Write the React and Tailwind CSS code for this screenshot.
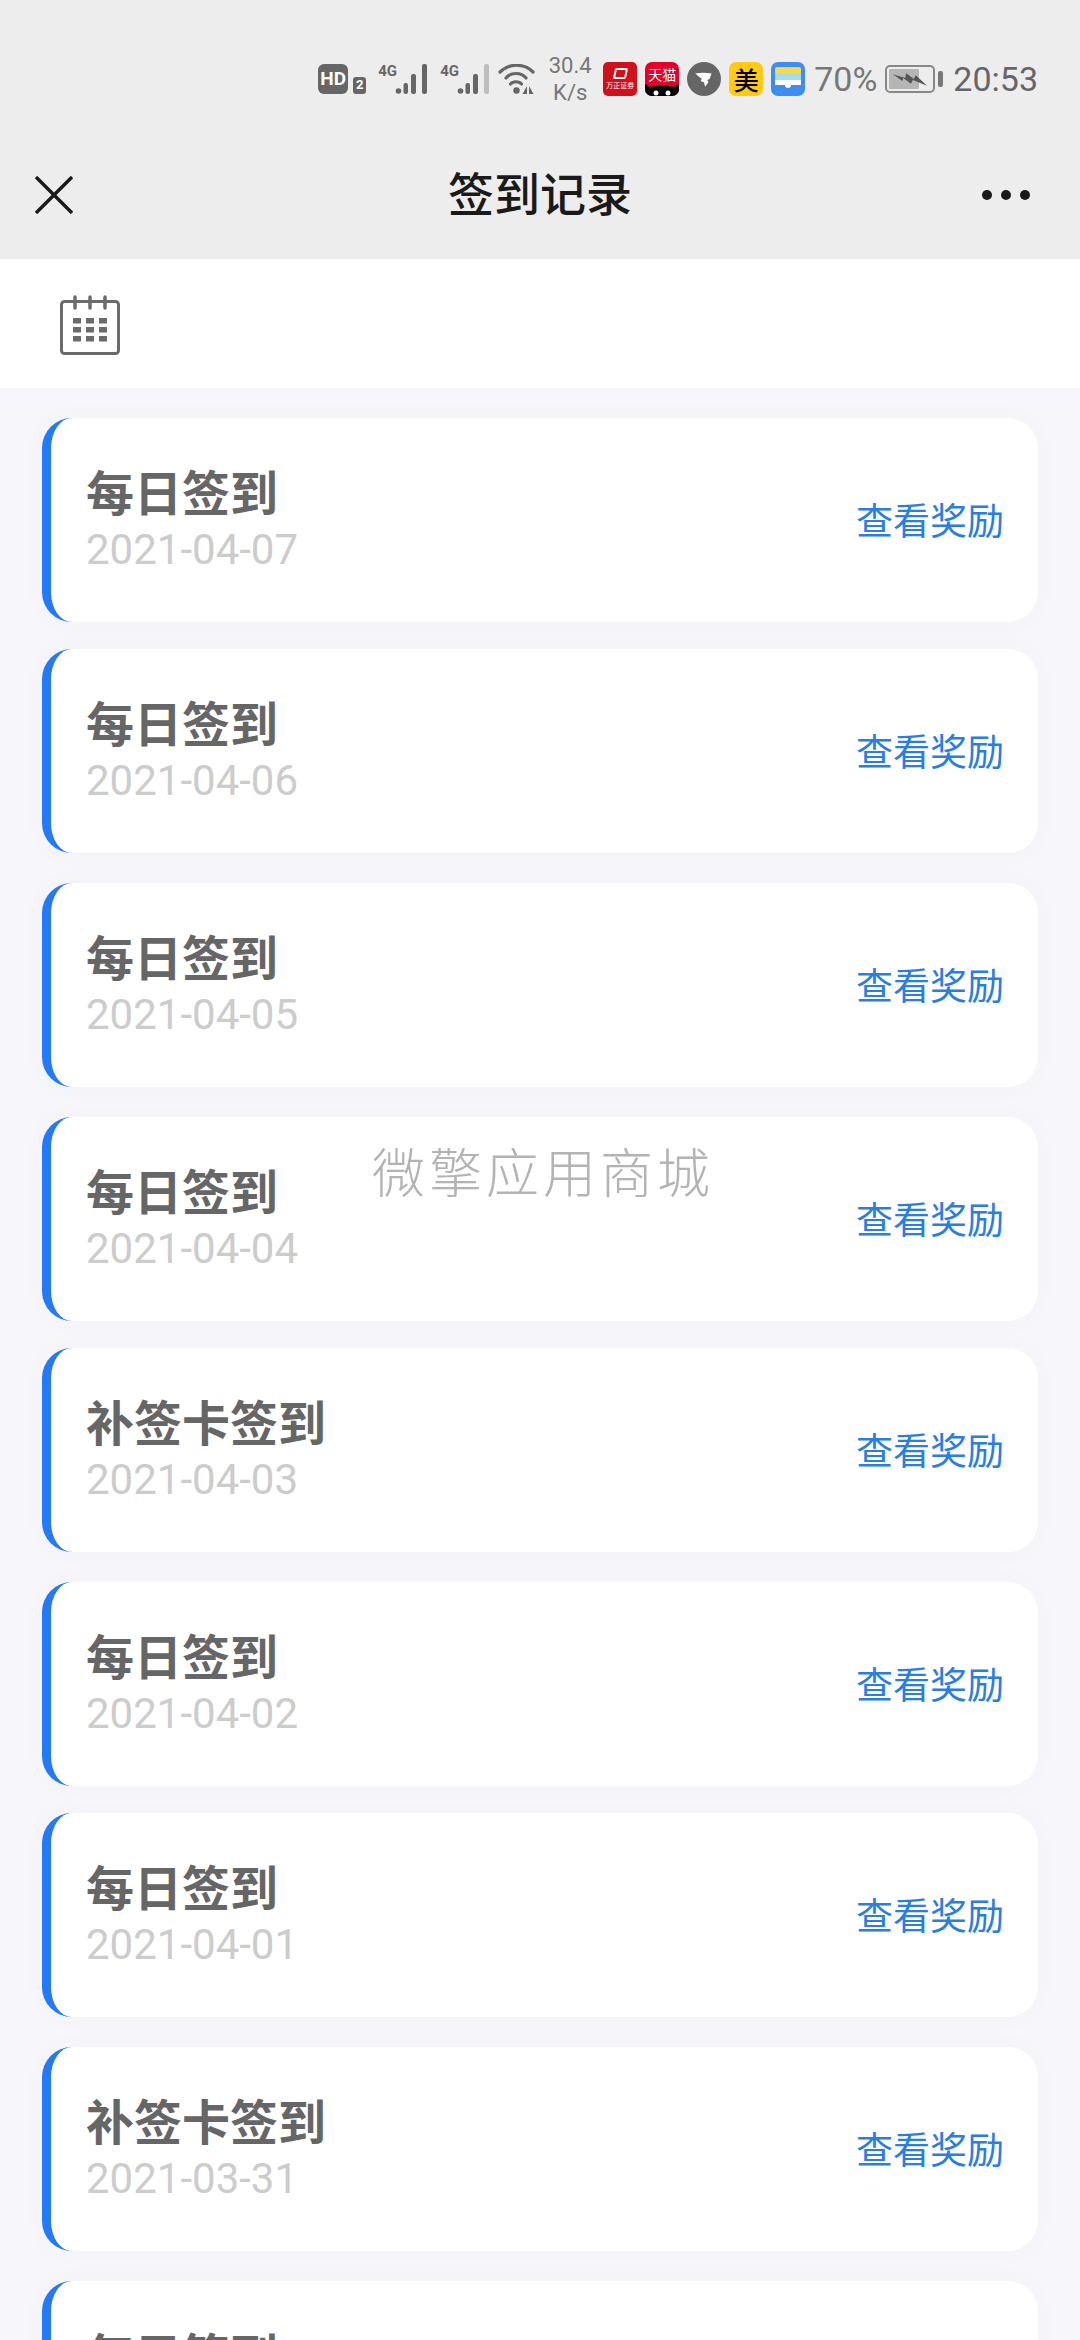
import { Fragment } from 'react';

const records = [
    { title: '每日签到', date: '2021-04-07', gap: 'mt-0' },
    { title: '每日签到', date: '2021-04-06', gap: 'mt-[27px]' },
    { title: '每日签到', date: '2021-04-05', gap: 'mt-[30px]' },
    { title: '每日签到', date: '2021-04-04', gap: 'mt-[30px]' },
    { title: '补签卡签到', date: '2021-04-03', gap: 'mt-[27px]' },
    { title: '每日签到', date: '2021-04-02', gap: 'mt-[30px]' },
    { title: '每日签到', date: '2021-04-01', gap: 'mt-[27px]' },
    { title: '补签卡签到', date: '2021-03-31', gap: 'mt-[30px]' },
    { title: '每日签到', date: '2021-03-30', gap: 'mt-[30px]' },
];

const cjk = "font-['Roboto','Noto_Sans_CJK_SC',sans-serif]";

function Signal({ weak }) {
    return (
        <div className="relative w-[50px] h-[30px] shrink-0">
            <span className="absolute left-0 -top-[1px] text-[15px] leading-[16px] font-bold text-[#666]">4G</span>
            <svg viewBox="0 0 50 30" className="absolute inset-0 w-[50px] h-[30px]">
                <circle cx="20.5" cy="27" r="2.8" fill="#666" />
                <rect x="25.5" y="19" width="4.5" height="11" rx="2" fill="#666" />
                <rect x="33" y="10" width="5" height="20" rx="2" fill="#666" />
                <rect x="44" y="0" width="5" height="30" rx="2" fill={weak ? '#bdbdbd' : '#666'} />
            </svg>
        </div>
    );
}

function StatusBar() {
    return (
        <div className="h-[130px] pt-[54px] pr-[42px] flex items-start justify-end text-[#666] font-['Roboto',sans-serif]">
            <div className="flex items-center h-[50px]">
                <div className="w-[30px] h-[30px] rounded-[6px] bg-[#666] text-white text-[19px] font-bold flex items-center justify-center">HD</div>
                <div className="ml-[5px] mt-[12px] w-[13px] h-[17px] rounded-[3px] bg-[#666] text-white text-[13px] font-bold flex items-center justify-center">2</div>
                <div className="ml-[12px]"><Signal /></div>
                <div className="ml-[12px]"><Signal weak /></div>
                <svg viewBox="0 0 38 30" className="ml-[8px] w-[38px] h-[30px]">
                    <path d="M2 8C11 -1 26 -1 35 8" fill="none" stroke="#666" strokeWidth="3.2" strokeLinecap="round" />
                    <path d="M8 14C13 8 23 8 28 14" fill="none" stroke="#666" strokeWidth="3.2" strokeLinecap="round" />
                    <path d="M12.5 20C15 17 21 17 23.5 20" fill="none" stroke="#666" strokeWidth="3.2" strokeLinecap="round" />
                    <circle cx="18.5" cy="26.5" r="3.2" fill="#666" />
                    <path d="M29 22l-4.5 8H29zM31 22v8h4.500z" fill="#666" />
                </svg>
                <div className="ml-[11px] w-[46px] text-center text-[22px] leading-[27px] text-[#777]">30.4<br />K/s</div>
                <div className="ml-[10px] w-[34px] h-[34px] rounded-[5px] bg-[#d0111b] text-white flex flex-col items-center justify-center">
                    <div className="w-[13px] h-[11px] mb-[2px] border-2 border-white rounded-[2px] -skew-x-12" />
                    <div className="text-[7px] leading-[9px] font-['Noto_Sans_CJK_SC',sans-serif]">万正证券</div>
                </div>
                <div className="ml-[8px] w-[34px] h-[34px] rounded-[7px] bg-[#e3002b] text-white overflow-hidden relative flex justify-center">
                    <div className="text-[14px] leading-[18px] mt-[3px] font-['Noto_Sans_CJK_SC',sans-serif]">天猫</div>
                    <svg viewBox="0 0 34 34" className="absolute inset-0 w-[34px] h-[34px]">
                        <path d="M0 34V22l5 3c7-2 17-2 24 0l5-3v12z" fill="#000" />
                        <circle cx="11" cy="31" r="2.5" fill="#fff" />
                        <circle cx="23" cy="31" r="2.500" fill="#fff" />
                    </svg>
                </div>
                <div className="ml-[8px] w-[34px] h-[34px] rounded-full bg-[#666] flex items-center justify-center">
                    <svg viewBox="0 0 20 20" className="w-[22px] h-[22px]">
                        <path d="M2 5c5-1 10-1 15 0l-2 5-2 1 1 2-3 4-1-4-3-1 1-2z" fill="#fff" />
                    </svg>
                </div>
                <div className="ml-[8px] w-[34px] h-[34px] rounded-[7px] bg-[#ffc914] text-black text-[25px] leading-none font-medium flex items-center justify-center font-['Noto_Sans_CJK_SC',sans-serif]">美</div>
                <div className="ml-[8px] w-[34px] h-[34px] rounded-[7px] bg-[#3f8df0] flex flex-col px-[4px] pt-[5px]">
                    <div className="h-[6px] bg-[#f7d84e] rounded-t-[2px]" />
                    <div className="h-[7px] bg-[#a9dcea]" />
                    <div className="h-[5px] bg-white" />
                    <div className="mx-auto w-[6px] h-[3px] bg-white rounded-b-[3px]" />
                </div>
                <span className="ml-[9px] text-[34px] text-[#777]">70%</span>
                <div className="ml-[8px] w-[50px] h-[28px] border-2 border-[#888] rounded-[5px] p-[2px] relative">
                    <div className="h-full w-[70%] bg-[#b5b5b5] rounded-[1px]" />
                    <svg viewBox="0 0 40 16" className="absolute left-[4px] top-[2px] w-[38px] h-[20px]">
                        <path d="M2 3l13 4 1-5 8 6 2-4 12 11-15-6-2 4-8-6-1 3z" fill="#555" />
                    </svg>
                </div>
                <div className="ml-[3px] w-[5px] h-[16px] bg-[#777] rounded-[2px]" />
                <span className="ml-[10px] text-[34px] text-[#666]">20:53</span>
            </div>
        </div>
    );
}

function NavBar() {
    return (
        <div className="h-[129px] flex items-center justify-between px-[35px]">
            <div className="w-[130px]">
                <svg viewBox="0 0 38 38" className="w-[38px] h-[38px] block">
                    <path d="M1 1L37 37M37 1L1 37" stroke="#1a1a1a" strokeWidth="3.4" />
                </svg>
            </div>
            <h1 className={`text-[46px] leading-none font-medium text-[#1a1a1a] ${cjk}`}>签到记录</h1>
            <div className="w-[130px] pr-[15px] flex gap-[9px] justify-end">
                <span className="w-[10px] h-[10px] rounded-full bg-[#1a1a1a]" />
                <span className="w-[10px] h-[10px] rounded-full bg-[#1a1a1a]" />
                <span className="w-[10px] h-[10px] rounded-full bg-[#1a1a1a]" />
            </div>
        </div>
    );
}

function CalendarIcon() {
    const cols = [73, 86, 99];
    const rows = [178, 187, 196];
    return (
        <svg viewBox="60 155 60 60" className="w-[60px] h-[60px]">
            <rect x="61.500" y="161.500" width="57" height="52" rx="3" fill="none" stroke="#6b6b6b" strokeWidth="3" />
            {[75, 90, 105].map((x) => (
                <line key={x} x1={x} y1="157" x2={x} y2="168" stroke="#6b6b6b" strokeWidth="3.500" strokeLinecap="round" />
            ))}
            {rows.map((y) => (
                <Fragment key={y}>
                    {cols.map((x) => (
                        <rect key={x} x={x} y={y} width="8" height="5.500" fill="#6b6b6b" />
                    ))}
                </Fragment>
            ))}
        </svg>
    );
}

function RecordCard({ title, date, gap }) {
    return (
        <div className={`${gap} h-[204px] shrink-0 bg-white rounded-[30px] border-l-[9px] border-[#2479f5] shadow-[0_0_24px_rgba(40,40,90,0.03)] flex items-center justify-between pl-[35px] pr-[34px]`}>
            <div className="flex flex-col">
                <div className={`text-[48px] leading-[60px] font-bold text-[#666] ${cjk}`}>{title}</div>
                <div className="text-[42px] leading-[50px] text-[#ccc] font-['Roboto',sans-serif]">{date}</div>
            </div>
            <button className={`mt-[5px] text-[37px] leading-none text-[#2a7de1] ${cjk}`}>查看奖励</button>
        </div>
    );
}

export default function App() {
    return (
        <div className="relative w-[1080px] h-[2340px] overflow-hidden bg-[#f7f7fb]">
            <div className="bg-[#ededed]">
                <StatusBar />
                <NavBar />
            </div>
            <div className="h-[129px] bg-white flex items-center pl-[60px] pt-[3px]">
                <CalendarIcon />
            </div>
            <div className="flex flex-col px-[42px] pt-[30px]">
                {records.map((r) => (
                    <RecordCard key={r.date} title={r.title} date={r.date} gap={r.gap} />
                ))}
            </div>
            {/* watermark over the list */}
            <div className={`absolute left-[6px] right-0 top-[1144px] text-center text-[53px] leading-[62px] tracking-[4px] font-light text-[#b3b3b3] ${cjk}`}>微擎应用商城</div>
        </div>
    );
}
